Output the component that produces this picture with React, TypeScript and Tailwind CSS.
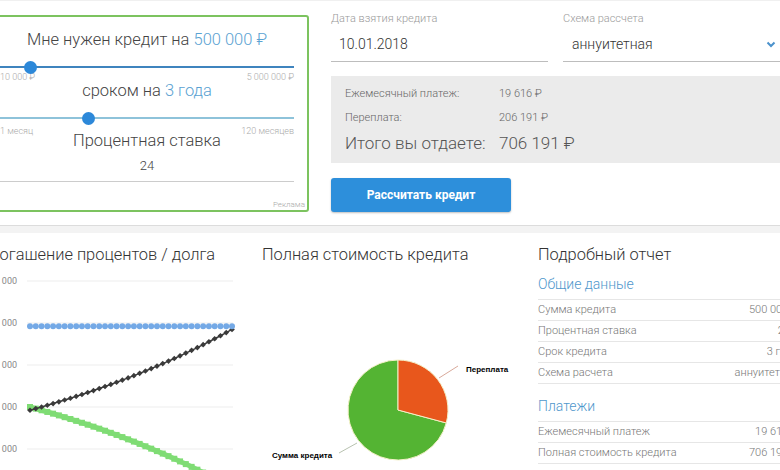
import React from "react";

const font = { fontFamily: "Roboto, 'Noto Sans', sans-serif" };

function Slider({ pos, line }: { pos: number; line: string }) {
  return (
    <div className="relative h-[12px]">
      <div className={`absolute left-0 right-0 top-[5px] h-[2px] ${line}`} />
      <div
        className="absolute top-0 w-[13px] h-[13px] -ml-[6px] rounded-full bg-[#2c88d9]"
        style={{ left: pos }}
      />
    </div>
  );
}

function LineChart() {
  const P = 500000;
  const r = 0.02;
  const n = 36;
  const pmt = (P * r) / (1 - Math.pow(1 + r, -n));
  let bal = P;
  const pts: { x: number; pay: number; prin: number; int: number }[] = [];
  for (let i = 0; i < n; i++) {
    const int = bal * r;
    const prin = pmt - int;
    bal -= prin;
    pts.push({ x: 44 + (i * 202) / 35, pay: pmt, prin, int });
  }
  const y = (v: number) => 184 - (v - 5000) * 0.0084;
  const grid = [
    { v: "25 000", y: 16 },
    { v: "20 000", y: 58 },
    { v: "15 000", y: 100 },
    { v: "10 000", y: 142 },
    { v: "5 000", y: 184 },
  ];
  return (
    <svg width="260" height="205" className="block">
      {grid.map((g) => (
        <g key={g.v}>
          <line x1="41" x2="247" y1={g.y} y2={g.y} stroke="#ededed" strokeWidth="1" />
          <text x="31" y={g.y + 3} textAnchor="end" fontSize="9" fill="#888" fontFamily="Roboto, sans-serif">
            {g.v}
          </text>
        </g>
      ))}
      <polyline
        points={pts.map((p) => `${p.x},${y(p.int)}`).join(" ")}
        fill="none"
        stroke="#86e07c"
        strokeWidth="5"
      />
      {pts.map((p, i) => (
        <rect key={"g" + i} x={p.x - 3} y={y(p.int) - 3} width="6" height="6" fill="#7fdc74" />
      ))}
      <polyline
        points={pts.map((p) => `${p.x},${y(p.prin)}`).join(" ")}
        fill="none"
        stroke="#3a3a3a"
        strokeWidth="1.5"
      />
      {pts.map((p, i) => (
        <rect
          key={"b" + i}
          x={p.x - 2}
          y={y(p.prin) - 2}
          width="4"
          height="4"
          fill="#3a3a3a"
          transform={`rotate(45 ${p.x} ${y(p.prin)})`}
        />
      ))}
      {pts.map((p, i) => (
        <circle key={"c" + i} cx={p.x} cy={y(p.pay)} r="3" fill="#74a9e6" />
      ))}
    </svg>
  );
}

function PieChart() {
  const cx = 136;
  const cy = 145;
  const R = 50;
  const th = (105 * Math.PI) / 180;
  const ex = cx + R * Math.sin(th);
  const ey = cy - R * Math.cos(th);
  return (
    <svg width="260" height="205" className="block">
      <path d={`M${cx},${cy} L${ex},${ey} A${R},${R} 0 1 1 ${cx},${cy - R} Z`} fill="#54b433" stroke="#f4f1c8" strokeWidth="1" />
      <path d={`M${cx},${cy} L${cx},${cy - R} A${R},${R} 0 0 1 ${ex},${ey} Z`} fill="#e8571c" stroke="#f4f1c8" strokeWidth="1" />
      <line x1="177" y1="113" x2="196" y2="101" stroke="#d9a99a" strokeWidth="1" />
      <text x="204" y="107" fontSize="8" fontWeight="bold" fill="#000" fontFamily="'Liberation Sans', sans-serif">
        Переплата
      </text>
      <line x1="77" y1="188" x2="95" y2="178" stroke="#b8c2b0" strokeWidth="1" />
      <text x="10" y="193" fontSize="8" fontWeight="bold" fill="#000" fontFamily="'Liberation Sans', sans-serif">
        Сумма кредита
      </text>
    </svg>
  );
}

function Row({ k, v }: { k: string; v: string }) {
  return (
    <div className="flex justify-between items-center h-[21px] border-b border-[#e6e6e6] text-[11px] font-light text-[#777]">
      <span>{k}</span>
      <span>{v}</span>
    </div>
  );
}

export default function App() {
  return (
    <div className="w-[780px] h-[470px] overflow-hidden bg-white border-t border-[#f0f0f0] box-border" style={font}>
      <div className="ml-[-14px] w-[820px]">
        <div className="flex items-start">
          <div className="mt-[14px] w-[323px] h-[197px] border-2 border-[#7cc35f] rounded-[3px] pt-[13px] pl-[12px] pr-[13px] box-border">
            <div className="text-center text-[16.5px] leading-[20px] font-light text-[#444]">
              Мне нужен кредит на <span className="text-[#5aa2d2]">500 000 ₽</span>
            </div>
            <div className="mt-[11px]">
              <Slider pos={30} line="bg-[#3f84be]" />
            </div>
            <div className="-mt-[1px] flex justify-between text-[9px] leading-[10px] font-light text-[#aaa]">
              <span>10 000 ₽</span>
              <span>5 000 000 ₽</span>
            </div>
            <div className="-mt-[1px] text-center text-[16.5px] leading-[20px] font-light text-[#444]">
              сроком на <span className="text-[#5aa2d2]">3 года</span>
            </div>
            <div className="mt-[11px]">
              <Slider pos={88} line="bg-[#8ec3da]" />
            </div>
            <div className="mt-[2px] flex justify-between text-[9px] leading-[10px] font-light text-[#aaa]">
              <span>1 месяц</span>
              <span>120 месяцев</span>
            </div>
            <div className="-mt-[5px] text-center text-[16.5px] leading-[20px] font-light text-[#444]">Процентная ставка</div>
            <div className="mt-[7px] text-center text-[13px] leading-[16px] font-light text-[#444] pb-[7px] border-b border-[#ccc]">
              24
            </div>
            <div className="mt-[18px] -mr-[11px] text-right text-[8px] leading-[10px] font-light text-[#aaa]">Реклама</div>
          </div>

          <div className="ml-[22px] w-[475px] pt-[11px]">
            <div className="flex">
              <div className="w-[217px] border-b border-[#bdbdbd] pb-[8px]">
                <div className="text-[11px] leading-[14px] font-light text-[#9a9a9a]">Дата взятия кредита</div>
                <div className="mt-[9px] pl-[8px] text-[14px] leading-[18px] font-light text-[#333]">10.01.2018</div>
              </div>
              <div className="ml-[15px] flex-1 border-b border-[#bdbdbd] pb-[8px]">
                <div className="text-[11px] leading-[14px] font-light text-[#9a9a9a]">Схема рассчета</div>
                <div className="mt-[9px] pl-[9px] pr-[30px] flex items-center justify-between text-[14px] leading-[18px] font-light text-[#333]">
                  <span>аннуитетная</span>
                  <svg width="10" height="8" viewBox="0 0 10 8">
                    <path d="M1.5 2.5 L5 6 L8.5 2.5" fill="none" stroke="#4b92cc" strokeWidth="2" />
                  </svg>
                </div>
              </div>
            </div>
            <div className="mt-[14px] h-[87px] bg-[#ebebeb] pl-[14px] pt-[11px] box-border">
              <div className="flex text-[11px] leading-[14px] font-light text-[#666]">
                <span className="w-[154px]">Ежемесячный платеж:</span>
                <span>19 616 ₽</span>
              </div>
              <div className="mt-[10px] flex text-[11px] leading-[14px] font-light text-[#666]">
                <span className="w-[154px]">Переплата:</span>
                <span>206 191 ₽</span>
              </div>
              <div className="mt-[7px] flex text-[17px] leading-[22px] font-light text-[#555]">
                <span className="w-[154px]">Итого вы отдаете:</span>
                <span>706 191 ₽</span>
              </div>
            </div>
            <button className="mt-[15px] w-[180px] h-[34px] rounded-[3px] bg-[#2d8fdb] text-white text-[12px] font-bold shadow-[0_1px_2px_rgba(0,0,0,0.25)]">
              Рассчитать кредит
            </button>
          </div>
        </div>

        <div className="mt-[13px] h-[8px] border-t border-[#dcdcdc] bg-[#f3f3f3] box-border" />

        <div className="mt-[12px] grid grid-cols-[260px_260px_260px] gap-x-[16px]">
          <div>
            <div className="pl-[2px] text-[16.4px] leading-[20px] font-light text-[#333]">Погашение процентов / долга</div>
            <LineChart />
          </div>
          <div>
            <div className="text-[16.4px] leading-[20px] font-light text-[#333]">Полная стоимость кредита</div>
            <PieChart />
          </div>
          <div>
            <div className="text-[16.4px] leading-[20px] font-light text-[#333]">Подробный отчет</div>
            <div className="mt-[10px] text-[14px] leading-[18px] font-light text-[#4f97cc]">Общие данные</div>
            <div className="mt-[6px] border-t border-[#e6e6e6]">
              <Row k="Сумма кредита" v="500 000 ₽" />
              <Row k="Процентная ставка" v="24%" />
              <Row k="Срок кредита" v="3 года" />
              <Row k="Схема расчета" v="аннуитетная" />
            </div>
            <div className="mt-[13px] text-[14px] leading-[18px] font-light text-[#4f97cc]">Платежи</div>
            <div className="mt-[6px] border-t border-[#e6e6e6]">
              <Row k="Ежемесячный платеж" v="19 616 ₽" />
              <Row k="Полная стоимость кредита" v="706 191 ₽" />
            </div>
          </div>
        </div>
      </div>
    </div>
  );
}
